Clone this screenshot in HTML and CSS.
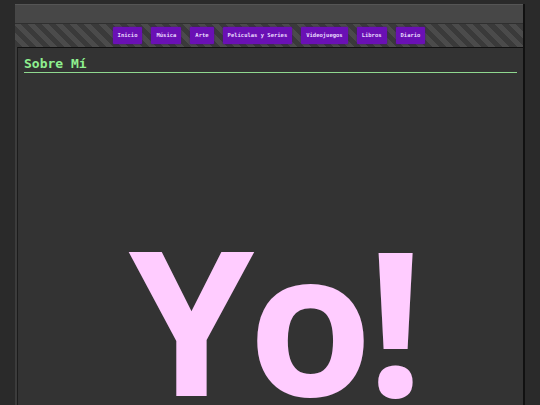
FILE: index.html
```html
<!DOCTYPE html>
<html lang="es">
<head>
  <meta charset="UTF-8">
  <title>Sobre Mí</title>
  <meta name="viewport" content="width=device-width, initial-scale=1.0">
  <link rel="stylesheet" href="styles.css">
</head>
<body>
  <div class="page">
    <header class="header"></header>

    <nav class="nav">
      <a href="#" class="nav-link">Inicio</a>
      <a href="#" class="nav-link">Música</a>
      <a href="#" class="nav-link">Arte</a>
      <a href="#" class="nav-link">Películas y Series</a>
      <a href="#" class="nav-link">Videojuegos</a>
      <a href="#" class="nav-link">Libros</a>
      <a href="#" class="nav-link">Diario</a>
    </nav>

    <main class="content">
      <h1 class="title">Sobre Mí</h1>
      <p class="big-hello">Yo!</p>
    </main>
  </div>
</body>
</html>
```

FILE: styles.css
```css
html, body {
  margin: 0;
  padding: 0;
  height: 100%;
  background: #2a2a2a;
  overflow: hidden;
}

body {
  padding-top: 4px;
  box-sizing: border-box;
}

.page {
  width: 508px;
  margin: 0 0 0 15px;
  min-height: 100%;
  display: flex;
  flex-direction: column;
  background: #3c3c3c;
  box-shadow: 2px 0 0 #111;
}

.header {
  flex-shrink: 0;
  height: 18px;
  background: #474747;
  border-top: 1px solid #555;
  border-bottom: 1px solid #2f2f2f;
}

.nav {
  flex-shrink: 0;
  height: 23px;
  display: flex;
  justify-content: center;
  align-items: center;
  gap: 9px;
  background: repeating-linear-gradient(
    45deg,
    #3a3a3a 0,
    #3a3a3a 5px,
    #4b4b4b 5px,
    #4b4b4b 10px
  );
}

.nav-link {
  display: block;
  padding: 0 5px;
  height: 17px;
  line-height: 17px;
  font-family: "DejaVu Sans Mono", monospace;
  font-weight: bold;
  font-size: 5.5px;
  color: #eadcff;
  text-decoration: none;
  background: #6a10b4;
  border-radius: 1px;
  box-shadow: 0 0 2px #4a0a80;
}

.content {
  flex: 1;
  margin-left: 2px;
  background: #333333;
  border-top: 1px solid #111;
  border-left: 1px solid #1c1c1c;
  padding: 0 6px 0 6px;
}

.title {
  margin: 9px 0 0;
  padding-bottom: 1px;
  font-family: "DejaVu Sans Mono", monospace;
  font-weight: bold;
  font-size: 13px;
  line-height: 14px;
  color: #8fef8f;
  border-bottom: 1px solid #8fd88f;
}

.big-hello {
  margin: 108px 0 0;
  padding-left: 6px;
  text-align: center;
  font-family: "Open Sans", sans-serif;
  font-weight: 700;
  font-size: 201px;
  letter-spacing: -6px;
  line-height: normal;
  color: #ffccff;
}
```
